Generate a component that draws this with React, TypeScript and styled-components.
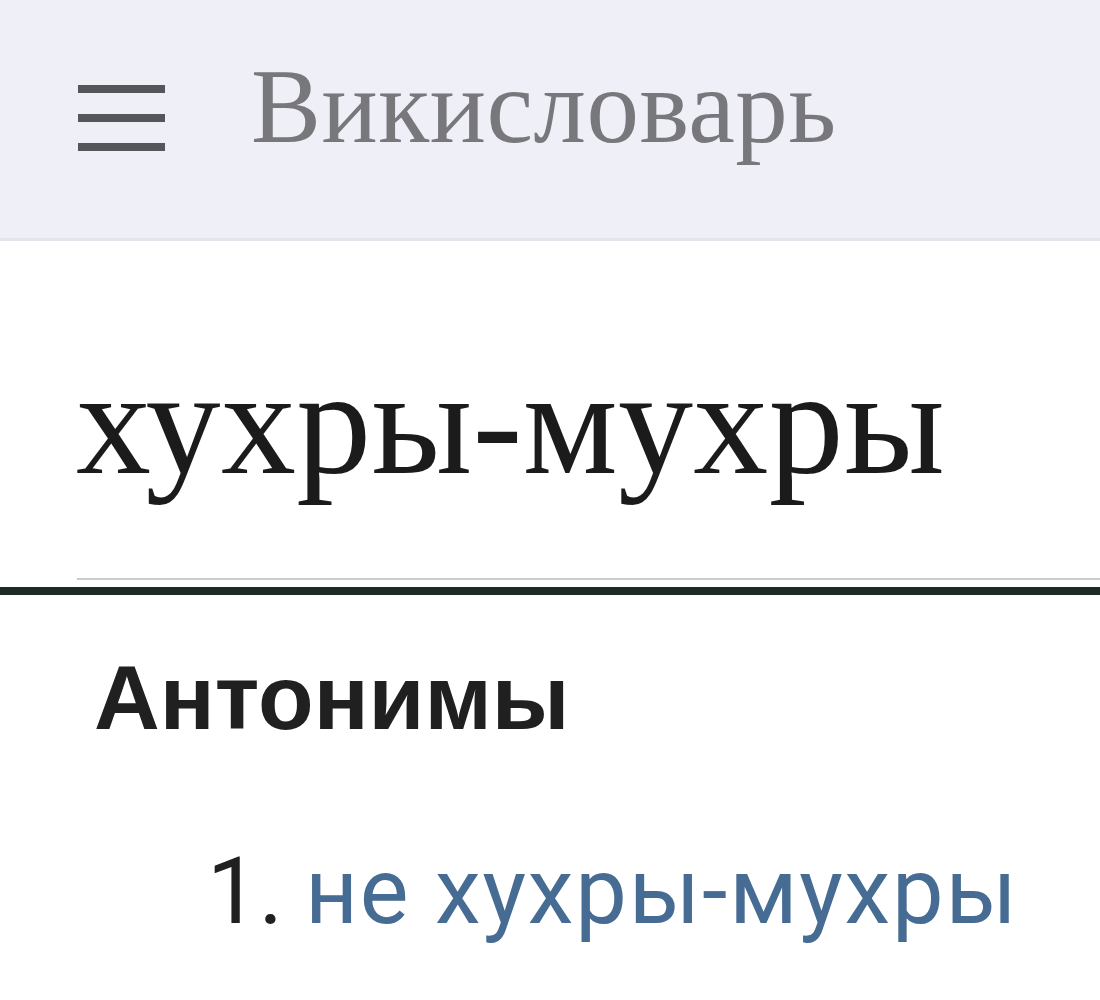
import React from "react";
import styled, { createGlobalStyle } from "styled-components";

const GlobalStyle = createGlobalStyle`
  html, body {
    margin: 0;
    padding: 0;
    background: #ffffff;
  }
`;

const Page = styled.div`
  width: 1100px;
  min-height: 1000px;
  overflow: hidden;
  background: #ffffff;
`;

const Header = styled.header`
  display: flex;
  align-items: flex-start;
  box-sizing: border-box;
  height: 241px;
  padding: 54px 0 0 78px;
  gap: 86px;
  background: #efeff7;
  border-bottom: 3px solid #e4e4ea;
`;

const MenuButton = styled.div`
  display: flex;
  flex-direction: column;
  gap: 21px;
  width: 87px;
  margin-top: 31px;
`;

const MenuBar = styled.span`
  display: block;
  height: 8px;
  background: #55555a;
`;

const Wordmark = styled.div`
  font-family: "Liberation Serif", "DejaVu Serif", serif;
  font-size: 105px;
  line-height: 1;
  letter-spacing: 0.5px;
  color: #77777c;
`;

const Title = styled.h1`
  margin: 106px 0 0 76px;
  font-family: "Liberation Serif", "DejaVu Serif", serif;
  font-weight: normal;
  font-size: 150px;
  line-height: 1;
  letter-spacing: 0.3px;
  color: #1b1b1b;
`;

const Rule = styled.div`
  margin-top: 81px;
  display: flex;
  flex-direction: column;
  gap: 7px;
`;

const LightLine = styled.div`
  margin-left: 77px;
  height: 2px;
  background: #c9cdd0;
`;

const DarkLine = styled.div`
  height: 8px;
  background: #1c2b26;
`;

const SectionHeading = styled.h2`
  margin: 57px 0 0 94px;
  font-family: "Liberation Sans", Arial, sans-serif;
  font-weight: bold;
  font-size: 91px;
  line-height: 1;
  color: #202020;
`;

const List = styled.ol`
  margin: 103px 0 0 0;
  padding-left: 0;
  list-style: none;
`;

const Item = styled.li`
  display: flex;
  align-items: baseline;
  gap: 22px;
  padding-left: 207px;
  font-family: Roboto, "Liberation Sans", sans-serif;
  font-size: 92px;
  line-height: 1;
  color: #202020;
`;

const Link = styled.a`
  color: #466c93;
  letter-spacing: 1.8px;
  text-decoration: none;
`;

export default function App() {
  return (
    <Page>
      <GlobalStyle />
      <Header>
        <MenuButton>
          <MenuBar />
          <MenuBar />
          <MenuBar />
        </MenuButton>
        <Wordmark>Викисловарь</Wordmark>
      </Header>
      <Title>хухры-мухры</Title>
      <Rule>
        <LightLine />
        <DarkLine />
      </Rule>
      <SectionHeading>Антонимы</SectionHeading>
      <List>
        <Item>
          <span>1.</span>
          <Link href="#">не хухры-мухры</Link>
        </Item>
      </List>
    </Page>
  );
}
